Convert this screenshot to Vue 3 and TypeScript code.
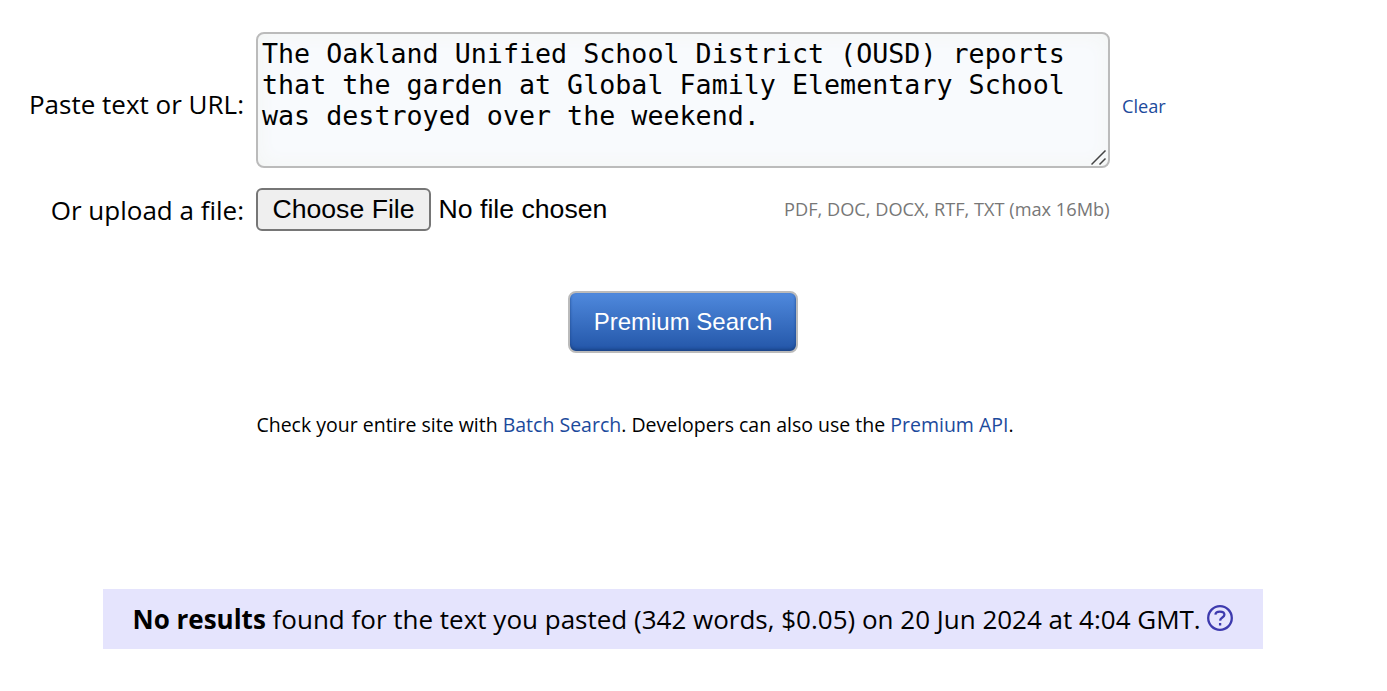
<template>
	<main class="page">
		<form class="search-form" @submit.prevent>
			<label class="label" for="source">Paste text or URL:</label>
			<div class="text-box">
				<textarea id="source" v-model="text" spellcheck="false"></textarea>
				<svg class="grip" viewBox="0 0 16 16" aria-hidden="true">
					<path d="M.5 14.5 14.5.5M8.5 14.5 14.5 8.5" />
				</svg>
			</div>
			<a class="clear" href="#" @click.prevent="handleClear">Clear</a>

			<span class="label upload-label">Or upload a file:</span>
			<div class="upload">
				<button type="button" class="choose" @click="fileEl?.click()">Choose File</button>
				<span class="file-name">{{fileName}}</span>
				<span class="formats">PDF, DOC, DOCX, RTF, TXT (max 16Mb)</span>
				<input ref="fileEl" type="file" hidden @change="handleFile">
			</div>
		</form>

		<button type="button" class="premium">Premium Search</button>

		<p class="more">
			Check your entire site with <a href="#">Batch Search</a>. Developers can also use the <a href="#">Premium API</a>.
		</p>

		<div class="results">
			<span class="results-text"><b>No results</b> found for the text you pasted ({{words}} words, {{price}}) on {{date}}.</span>
			<svg class="help" viewBox="0 0 26 26" aria-hidden="true">
				<circle cx="13" cy="13" r="11.8" />
				<path d="M8.4 9.6C8.6 7.6 10.4 6.7 12.9 6.7c2.7 0 4.5 1.1 4.5 3.1 0 2.8-4.2 2.7-4.3 5.8M13.1 17.9v2.6" />
			</svg>
		</div>
	</main>
</template>

<script setup lang="ts">
import {computed, ref} from "vue";

const text = ref("The Oakland Unified School District (OUSD) reports that the garden at Global Family Elementary School was destroyed over the weekend.");
const fileEl = ref<HTMLInputElement>();
const file = ref<File>();
const fileName = computed(()=>file.value?.name ?? "No file chosen");

const words = 342;
const price = "$0.05";
const date = "20 Jun 2024 at 4:04 GMT";

function handleClear(){
	text.value = "";
}

function handleFile(){
	file.value = fileEl.value?.files?.[0];
}
</script>

<style>
body {
	background: #fff;
}
</style>

<style scoped>
.page {
	box-sizing: border-box;
	width: 1366px;
	padding-top: 32px;
	font-family: "Open Sans", "Noto Sans", sans-serif;
	font-size: 26px;
	color: #000;
}

.search-form {
	display: grid;
	grid-template-columns: 244px 854px auto;
	grid-template-rows: 136px 43px;
	column-gap: 12px;
	row-gap: 20px;
	align-items: center;
}

.label {
	text-align: right;
	line-height: 36px;
	white-space: nowrap;
	padding-top: 7px;
}

.upload-label {
	padding-top: 0;
}

.text-box {
	position: relative;
	height: 136px;
}

textarea {
	display: block;
	box-sizing: border-box;
	width: 854px;
	height: 136px;
	margin: 0;
	padding: 4px;
	border: 2px solid #bbb;
	border-radius: 8px;
	outline: none;
	resize: none;
	overflow: hidden;
	background: #f8fafd;
	box-shadow: inset 0 0 20px #f3f5f3;
	color: #000;
	font: 26.67px/31px "DejaVu Sans Mono", monospace;
	letter-spacing: 0.01px;
}

.grip {
	position: absolute;
	right: 3px;
	bottom: 2px;
	width: 16px;
	height: 16px;
	fill: none;
	stroke: #444;
	stroke-width: 1.5;
}

a {
	color: #1c4a9c;
	text-decoration: none;
}

.clear {
	font-size: 18.2px;
	line-height: 24px;
	padding-top: 12px;
}

.upload {
	display: flex;
	align-items: center;
	height: 43px;
}

.choose {
	box-sizing: border-box;
	width: 175px;
	height: 43px;
	padding: 0 0 1px;
	border: 2px solid #767676;
	border-radius: 6px;
	background: #efefef;
	color: #000;
	font: 26.67px/30px "Liberation Sans", Arial, sans-serif;
	white-space: nowrap;
}

.file-name {
	margin-left: 7.5px;
	padding-bottom: 1px;
	font: 26.67px/30px "Liberation Sans", Arial, sans-serif;
}

.formats {
	margin-left: auto;
	padding-right: 0.5px;
	padding-bottom: 2px;
	font-size: 18.2px;
	color: #777;
	white-space: nowrap;
}

.premium {
	display: block;
	box-sizing: border-box;
	width: 230px;
	height: 62px;
	margin: 60px 0 0 568px;
	padding: 0 0 1px;
	border: 2px solid #bbb;
	border-radius: 8px;
	background: linear-gradient(#4f89dd, #2356a8);
	box-shadow: inset 0 -2px 3px #1b4488;
	color: #fff;
	font: 24px/30px "Liberation Sans", Arial, sans-serif;
}

.more {
	margin: 58px 0 0 256.4px;
	font-size: 19.5px;
	line-height: 28px;
	white-space: nowrap;
}

.results {
	display: flex;
	align-items: center;
	box-sizing: border-box;
	width: 1160px;
	height: 60px;
	margin: 150px 0 0 103px;
	padding-left: 29.5px;
	background: #e5e4fd;
}

.results-text {
	white-space: nowrap;
}

.help {
	width: 26px;
	height: 26px;
	margin-left: 6.5px;
	margin-bottom: 2px;
	fill: none;
	stroke: #3d3aae;
	stroke-width: 2.3;
}
</style>
